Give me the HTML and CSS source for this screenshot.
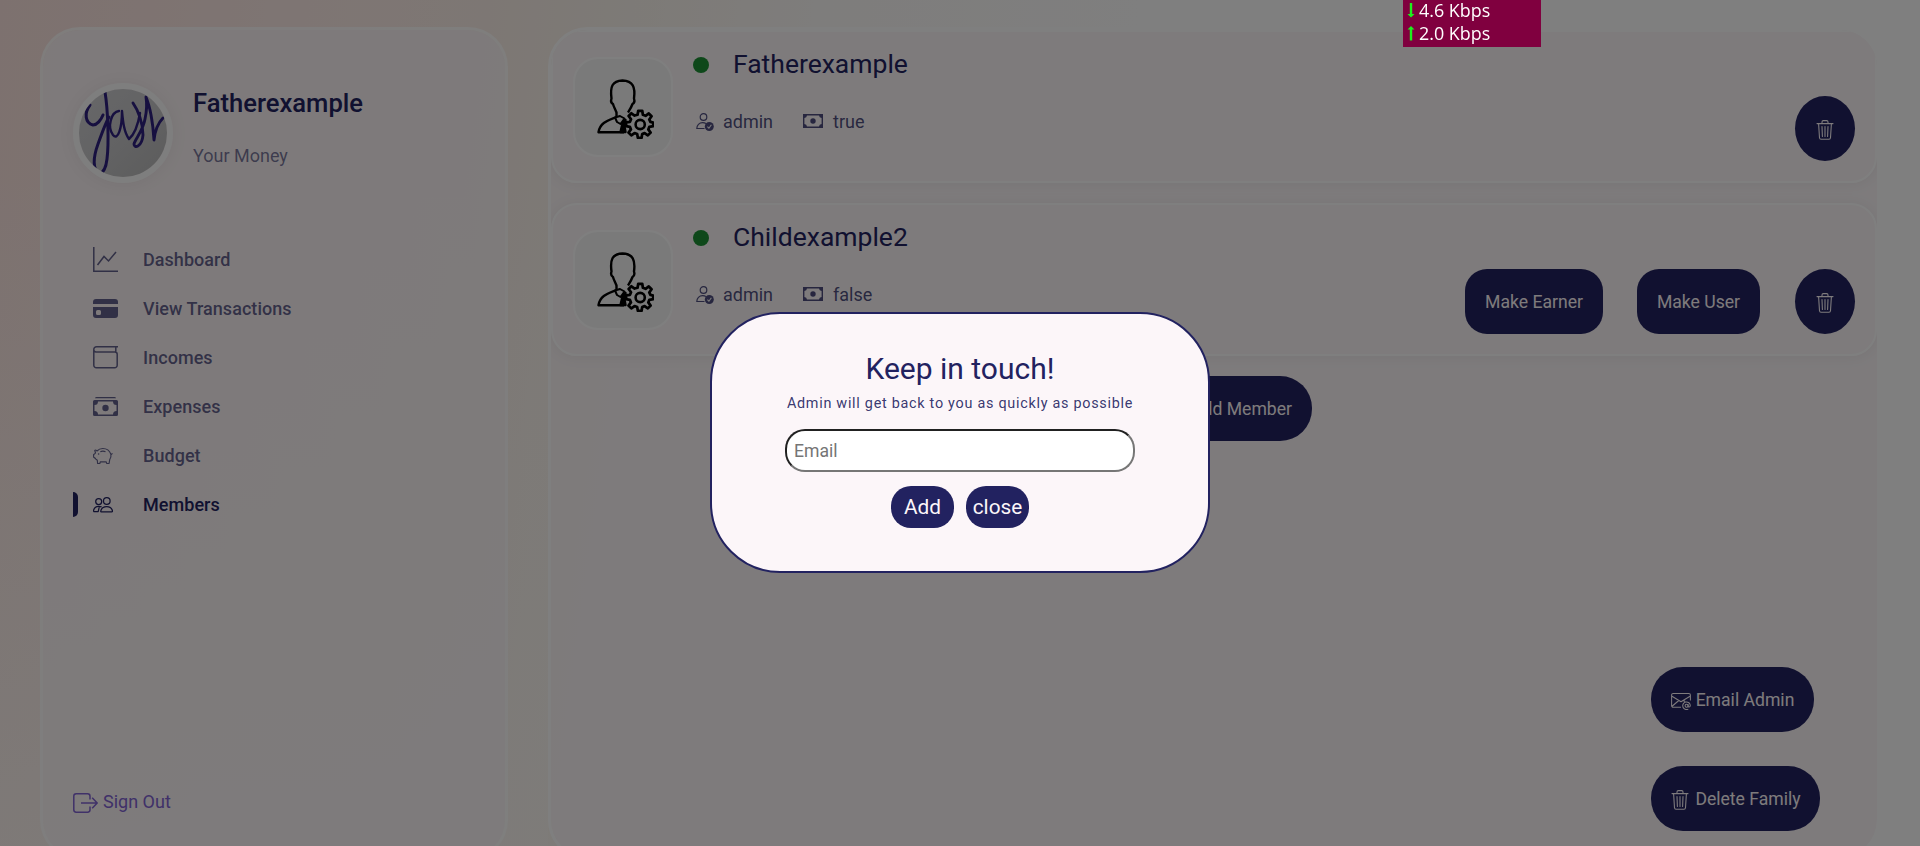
FILE: index.html
```html
<!DOCTYPE html>
<html lang="en">
<head>
<meta charset="utf-8">
<title>Your Money - Members</title>
<link rel="stylesheet" href="styles.css">
</head>
<body>
<svg class="defs" aria-hidden="true">
  <symbol id="trash" viewBox="0 0 20 20"><g fill="none" stroke="currentColor" stroke-width="1.1" stroke-linecap="round" stroke-linejoin="round"><path d="M2 3.600h16M3.600 3.600l.9 14.200c.1.9.7 1.500 1.500 1.500h8c.8 0 1.400-.6 1.500-1.500l.9-14.200M7 3.500V1.900c0-.8.5-1.300 1.300-1.300h3.400c.8 0 1.300.5 1.300 1.300v1.600M10 6.500v10M7 6.500l.4 10M13 6.500l-.4 10"/></g></symbol>
  <symbol id="cash" viewBox="0 0 20 14"><path fill="currentColor" fill-rule="evenodd" d="M0 0h20v14H0zM4 1.400A3 3 0 0 1 1.400 4v6A3 3 0 0 1 4 12.600h12A3 3 0 0 1 18.600 10V4A3 3 0 0 1 16 1.400z"/><circle cx="10" cy="7" r="2.700" fill="currentColor"/></symbol>
  <symbol id="person-check" viewBox="0 0 18 18"><g fill="none" stroke="currentColor" stroke-width="1.200"><circle cx="7.500" cy="4" r="3.300"/><path d="M8.500 15.500H.8c0-3.300 2.400-5.800 5.900-5.800 1.200 0 2.200.2 3.100.7"/></g><circle cx="13.300" cy="13.500" r="4.500" fill="currentColor"/><path d="M11.400 13.700l1.500 1.500 2.500-3.500" fill="none" stroke="#f8f5f5" stroke-width="1.100"/></symbol>
  <symbol id="usergear" viewBox="0 0 57 60"><g fill="none" stroke="#000" stroke-width="2.400" stroke-linejoin="round"><path d="M19.500 38v-4.500c-1-3-2.700-5.500-3.500-8.500-1.800-1-2.300-3-1.500-5.500C13 8 15 1.800 25.500 1.500 36 1.800 38.500 8 37 19.500c.8 2.500.3 4.500-1.500 5.500-1 3-2.600 5.500-4.500 8.500"/><path d="M19.500 38C11 41.500 3 43.500 1.500 53.200H27"/><path stroke-width="2" d="M18 38.500l5-1.500 4.500 2.500-4 5.500-3.500-2z"/><path fill="#000" d="M23.500 53l2-8.500 3-3.500-1 6.500 1 5.500z"/><path stroke-width="2.900" d="M40.400 36.400l.7-4.200h4.200l.7 4.200 2.800 1.100 3.400-2.500 2.900 2.900-2.400 3.400 1.200 2.600 3 .7v3.700l-4.100.8-1.100 2.700 2.400 3.400-2.900 2.900-3.400-2.400-2.500 1-.7 4h-3.900l-.7-4-2.800-1.100-3.400 2.500-2.900-2.900 2.500-3.400-1.100-2.700-4-.7v-3.900l4.100-.7 1.100-2.700-2.500-3.400 2.900-2.900 3.400 2.400z" transform="translate(2.200 1.200) scale(.95)"/><circle cx="43.200" cy="45.500" r="4.600" stroke-width="2.600"/></g></symbol>
</svg>

<div class="app">
  <nav class="sidebar">
    <div class="profile">
      <svg class="avatar" viewBox="0 0 88 88">
        <defs><linearGradient id="paper" x2="1" y2="1"><stop offset="0" stop-color="#cfcfd2"/><stop offset=".5" stop-color="#c6c6c8"/><stop offset="1" stop-color="#b8b8b8"/></linearGradient></defs>
        <rect width="88" height="88" fill="url(#paper)"/>
        <g fill="none" stroke="#2e2180" stroke-width="2.400" stroke-linecap="round" stroke-linejoin="round">
          <path stroke-width="3" d="M11 16C5 24 6 34 14 36c4 0 8-5 10-10M26 3c3 18 4 51 2 67-1 9-4 14-8 15-7-6-5-19-1-30 4-11 7-20 11-27"/>
          <path d="M40 22c-8 1-12 16-6 24 5 6 9-7 9-24 1 11 2 21 7 28 6-5 9-14 11-26"/>
          <path stroke-width="2.900" d="M54 14c5 7 10 20 10 32-1 12-9 14-9 9 1-5 9-13 11-25 2-9 2-16 1-22 5 12 7 28 8 43 1-9 4-17 9-22"/>
        </g>
      </svg>
      <div class="who"><h2>Fatherexample</h2><p>Your Money</p></div>
    </div>
    <ul class="menu">
      <li><svg viewBox="0 0 25 25"><path d="M.8 0v24.200H25M4.500 18L11 9.500l4.500 4.500L23 5" fill="none" stroke="currentColor" stroke-width="1.500"/></svg><span>Dashboard</span></li>
      <li><svg viewBox="0 0 25 25"><path fill="currentColor" d="M0 8V6a3 3 0 0 1 3-3h19a3 3 0 0 1 3 3v2z"/><path fill="currentColor" fill-rule="evenodd" d="M0 11h25v8a3 3 0 0 1-3 3H3a3 3 0 0 1-3-3zm4.500 3a1.500 1.500 0 0 0-1.500 1.500v2A1.500 1.500 0 0 0 4.500 19h2A1.500 1.500 0 0 0 8 17.500v-2A1.500 1.500 0 0 0 6.500 14z"/></svg><span>View Transactions</span></li>
      <li><svg viewBox="0 0 25 25"><path d="M25 1.800H3.500A2.700 2.700 0 0 0 .8 4.500v15.700a2.500 2.500 0 0 0 2.500 2.500h18.400a2.500 2.500 0 0 0 2.500-2.500V9.300a2.300 2.300 0 0 0-2.300-2.300H3A2.200 2.200 0 0 1 .8 4.800M22.800 2v5" fill="none" stroke="currentColor" stroke-width="1.500"/></svg><span>Incomes</span></li>
      <li><svg viewBox="0 0 25 25"><path d="M2 4.200a1.500 1.500 0 0 1 1.500-1.200h18A1.500 1.500 0 0 1 23 4.200z" fill="currentColor"/><path fill="currentColor" fill-rule="evenodd" d="M1.500 6h22A1.500 1.500 0 0 1 25 7.500v13a1.500 1.500 0 0 1-1.500 1.500h-22A1.500 1.500 0 0 1 0 20.500v-13A1.500 1.500 0 0 1 1.500 6zM5 7.500A3.500 3.500 0 0 1 1.500 11v6A3.500 3.500 0 0 1 5 20.500h15a3.500 3.500 0 0 1 3.500-3.500v-6A3.500 3.500 0 0 1 20 7.500z"/><circle cx="12.500" cy="14" r="3.200" fill="currentColor"/></svg><span>Expenses</span></li>
      <li><svg class="small" viewBox="0 0 20 20"><g fill="none" stroke="currentColor" stroke-width="1.150" stroke-linejoin="round"><path d="M4 5C2.800 4 2.500 3.700 1.800 4.500L2.500 7C1.800 8 1.600 8.200.6 8.600v2.500c1 .4 1.500.7 2.300 2l1.400 1.200.3 3.200h2.200l.6-1.700h5.700l.7 1.700h2.300l.6-3.900c1.300-1.500 1.500-3.500 1.200-5.300C16.500 4.500 13 2.500 9.800 2.500 7.500 2.500 5.500 3.300 4 5zM17.900 8.800l1.600-1.500"/><path d="M7.300 5.800c1.700-.8 3.500-.8 5.200 0"/></g><circle cx="5.600" cy="8" r=".8" fill="currentColor"/></svg><span>Budget</span></li>
      <li class="active"><svg class="small" viewBox="0 0 20 20"><g fill="none" stroke="currentColor" stroke-width="1.250" stroke-linejoin="round"><circle cx="13.800" cy="6" r="3.300"/><circle cx="5.700" cy="6.600" r="3"/><path d="M8.200 16.800h10.500c1 0 .8-.8.6-1.500-.7-2.200-2.700-3.700-5.600-3.700s-5 1.500-5.700 3.700c-.2.700-.6 1.500.2 1.500zM8.600 11.800c-1-.3-1.700-.5-2.900-.5-2.500 0-4.300 1.300-5 3.700-.3 1-.1 1.700.8 1.700h3.700l1-4.500"/></g></svg><span>Members</span></li>
    </ul>
    <a class="signout"><svg viewBox="0 0 25 20"><path d="M17 6.500V3.200A2.400 2.400 0 0 0 14.600.8H3.200A2.400 2.400 0 0 0 .8 3.200v13.600a2.400 2.400 0 0 0 2.400 2.400h11.400a2.400 2.400 0 0 0 2.400-2.400v-3.300M8 10h16M19.200 4.800L24.200 10l-5 5.200" fill="none" stroke="currentColor" stroke-width="1.500" stroke-linejoin="round"/></svg><span>Sign Out</span></a>
  </nav>

  <main class="panel">
    <section class="card">
      <div class="pic"><svg><use href="#usergear"/></svg></div>
      <div class="info">
        <div class="name"><i class="dot"></i><h3>Fatherexample</h3></div>
        <div class="meta"><svg class="pc"><use href="#person-check"/></svg><span class="role">admin</span><svg class="cash"><use href="#cash"/></svg><span>true</span></div>
      </div>
      <div class="actions"><button class="btn round"><svg><use href="#trash"/></svg></button></div>
    </section>
    <section class="card">
      <div class="pic"><svg><use href="#usergear"/></svg></div>
      <div class="info">
        <div class="name"><i class="dot"></i><h3>Childexample2</h3></div>
        <div class="meta"><svg class="pc"><use href="#person-check"/></svg><span class="role">admin</span><svg class="cash"><use href="#cash"/></svg><span>false</span></div>
      </div>
      <div class="actions"><button class="btn earner">Make Earner</button><button class="btn user">Make User</button><button class="btn round"><svg><use href="#trash"/></svg></button></div>
    </section>
    <button class="btn pill add">Add Member</button>
    <div class="family">
      <button class="btn pill email"><svg viewBox="0 0 20 20"><g fill="none" stroke="currentColor" stroke-width="1.050" stroke-linejoin="round"><path d="M10 16.300H2.200A1.600 1.600 0 0 1 .6 14.700V4a1.600 1.600 0 0 1 1.600-1.600h15.600A1.600 1.600 0 0 1 19.400 4v5.500M.6 5l9.400 5.700L19.400 5M.8 15.500l7-6M12.200 9.500l2 1"/><circle cx="15.600" cy="14.800" r="1.500"/><path d="M17.100 13.200v2c0 1.300 2.200 1.200 2.200-.6a3.800 3.800 0 1 0-2 3.500"/></g></svg>Email Admin</button>
      <button class="btn pill delete"><svg><use href="#trash"/></svg>Delete Family</button>
    </div>
  </main>
</div>

<div class="overlay">
  <form class="modal">
    <h1>Keep in touch!</h1>
    <p>Admin will get back to you as quickly as possible</p>
    <input type="email" placeholder="Email">
    <div class="row"><button type="button">Add</button><button type="button">close</button></div>
  </form>
</div>

<div class="netspeed">
  <div><svg viewBox="0 0 8 15"><path d="M2.800 0h2.400v11H7.500L4 14.500.5 11h2.300z" fill="#1df01d"/></svg>4.6 Kbps</div>
  <div><svg viewBox="0 0 8 15"><path d="M2.800 14.500h2.400V3.500H7.500L4 0 .5 3.500h2.300z" fill="#1df01d"/></svg>2.0 Kbps</div>
</div>
</body>
</html>
```
FILE: styles.css
```css
* { box-sizing: border-box; margin: 0; padding: 0; }
html, body { height: 846px; overflow: hidden; }
body {
  font-family: Roboto, "Noto Sans", sans-serif;
  font-size: 18px;
  color: #222260;
  background:
    linear-gradient(180deg, rgba(252, 248, 244, 0) 20%, rgba(252, 248, 244, .75) 100%) 0 0 / 548px 100% no-repeat,
    linear-gradient(98deg, #fbe3de 0, #fdebe7 15%, #fbefe8 24%, #fbf5ee 31%, #fdfaf8 40%, #fefefe 56%, #fefefe 100%);
}
button, input { font-family: inherit; }
.defs { position: absolute; width: 0; height: 0; }

.app { display: flex; gap: 40px; padding: 27px 40px 0; }
.sidebar, .panel { height: 833px; border: 3px solid #fff; border-radius: 40px; background: rgba(252, 246, 248, .88); background-clip: padding-box; }
.sidebar { width: 468px; flex: none; padding: 53px 30px 28px; display: flex; flex-direction: column; border-color: rgba(255, 255, 255, .8); }

.profile { display: flex; gap: 20px; height: 100px; }
.avatar { width: 100px; height: 100px; flex: none; border: 6px solid #fcfcfc; border-radius: 50%; box-shadow: 0 1px 17px rgba(0, 0, 0, .06); }
.who { padding-top: 5px; }
.who h2 { font-size: 25.6px; line-height: 30px; font-weight: 500; }
.who p { margin-top: 26px; line-height: 24px; color: rgba(34, 34, 96, .6); }

.menu { list-style: none; margin-top: 52px; flex: 1; }
.menu li { display: flex; align-items: center; height: 49px; padding-left: 20px; color: rgba(34, 34, 96, .7); font-weight: 500; letter-spacing: .05px; position: relative; }
.menu svg { width: 25px; height: 25px; margin-right: 25px; }
.menu svg.small { width: 20px; height: 20px; margin-right: 30px; }
.menu .active { color: #222260; }
.menu .active::before { content: ""; position: absolute; left: 0; top: 12px; width: 5px; height: 25px; border-radius: 0 5px 5px 0; background: #222260; }
.signout { display: flex; align-items: center; gap: 5px; height: 24px; color: #8062d2; margin-bottom: 16px; }
.signout svg { width: 25px; height: 20px; margin-top: 3px; }

.panel { flex: 1; overflow: hidden; display: flex; flex-direction: column; }
.card { flex: none; display: flex; height: 153px; margin-bottom: 20px; padding: 25px 20px 20px; border: 2px solid #fff; border-radius: 26px; background: #fcf7f8; box-shadow: 0 1px 15px rgba(0, 0, 0, .06); }
.pic { width: 100px; height: 100px; flex: none; border: 2px solid #fff; border-radius: 25px; background: #f5f5f5; padding: 20px 0 0 22px; }
.pic svg { width: 57px; height: 60px; display: block; }
.info { padding-left: 20px; flex: 1; }
.name { display: flex; gap: 24px; height: 16px; align-items: center; }
.dot { width: 16px; height: 16px; border-radius: 50%; background: #1d9035; }
.name h3 { font-size: 26.5px; font-weight: 400; line-height: 30px; margin-bottom: 2px; }
.meta { display: flex; align-items: center; height: 24px; margin-top: 36px; color: rgba(34, 34, 96, .8); }
.meta .pc { width: 18px; height: 18px; margin: 1px 9px 0 3px; }
.meta .role { width: 50px; }
.meta .cash { width: 20px; height: 14px; margin: 0 10px 0 30px; }
.actions { display: flex; align-items: flex-end; gap: 34px; }
.btn { height: 65px; border: 0; background: #222260; color: #fcf6f9; font-size: 17.6px; border-radius: 22px; white-space: nowrap; display: flex; align-items: center; justify-content: center; }
.btn svg { width: 20px; height: 20px; flex: none; margin-top: 3px; }
.round { width: 60px; border-radius: 50%; }
.earner { width: 138px; }
.user { width: 123px; margin-right: 1px; }
.pill { border-radius: 32px; padding: 0 20px; gap: 5px; }
.add { align-self: center; width: 196px; justify-content: flex-end; flex: none; }
.family { margin: 226px 0 0 1100px; display: grid; gap: 34px; justify-items: start; }
.email { width: 163px; }
.delete { width: 169px; }

.overlay { position: fixed; inset: 0; background: rgba(0, 0, 0, .5); }
.modal { position: absolute; left: 710px; top: 312px; width: 500px; height: 261px; border: 2px solid #222260; border-radius: 70px; background: #fcf6f9; display: flex; flex-direction: column; align-items: center; padding-top: 36px; }
.modal h1 { font-size: 30px; font-weight: 400; line-height: 38px; }
.modal p { font-size: 14.4px; line-height: 20px; margin-top: 6px; letter-spacing: .05em; color: rgba(34, 34, 96, .9); white-space: nowrap; }
.modal input { width: 350px; height: 43px; margin-top: 15px; border: 2px inset #767676; border-radius: 20px; padding: 0 7px; background: #fff; font-size: 17.6px; }
.modal input::placeholder { color: #757575; }
.row { display: flex; gap: 12px; margin-top: 14px; }
.row button { width: 63px; height: 42px; border: 0; border-radius: 20px; background: #222260; color: #fcf6f9; font-size: 20.8px; }

.netspeed { position: fixed; left: 1403px; top: 0; width: 138px; height: 47px; background: #80003f; color: #fff; font: 17.9px/23px "Open Sans", sans-serif; padding-left: 4px; }
.netspeed div { display: flex; align-items: center; gap: 4px; height: 23px; margin-top: -1px; }
.netspeed div + div { margin-top: 0; }
.netspeed svg { width: 8px; height: 15px; }
```
